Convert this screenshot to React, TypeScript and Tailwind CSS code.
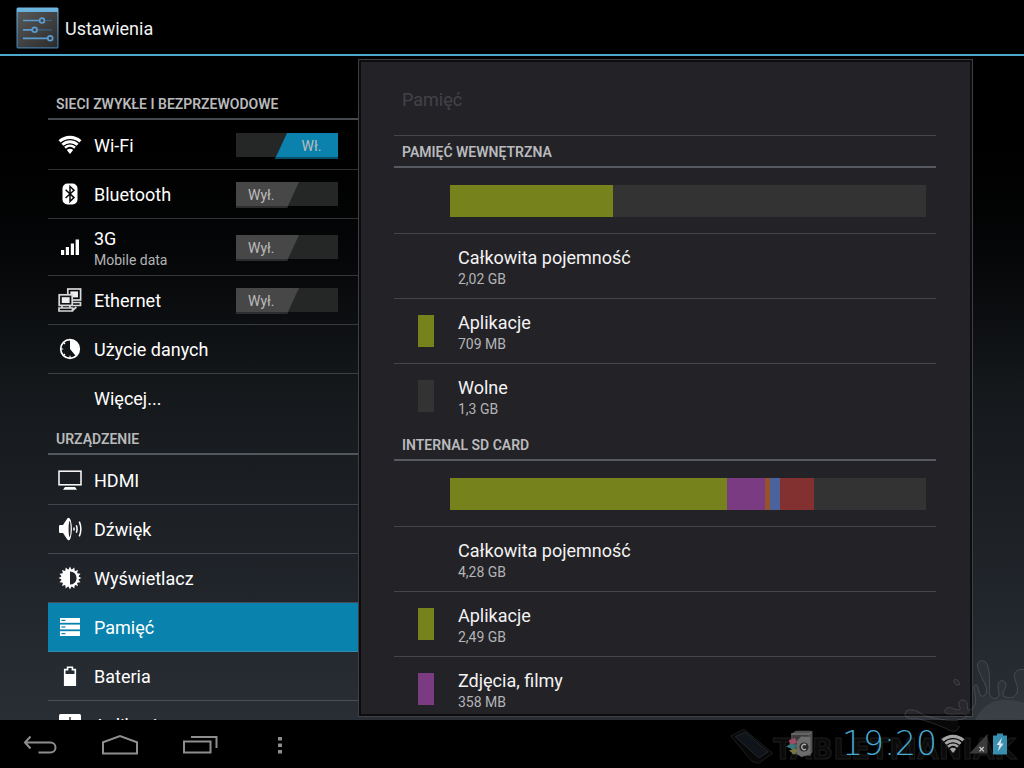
import { useState } from "react";
import type { ReactNode } from "react";

/* ---------- icons ---------- */

const WifiGlyph = () => (
  <svg width="24" height="20" viewBox="0 0 24 20" fill="none" stroke="currentColor">
    <path d="M1.6 6.4C7.4 .9 16.6 .9 22.4 6.4" strokeWidth="3.2" />
    <path d="M4.4 9.8C8.7 5.8 15.3 5.8 19.6 9.8" strokeWidth="2.9" />
    <path d="M7 12.8C9.9 10.2 14.1 10.2 17 12.8" strokeWidth="2.5" />
    <path d="M8.8 15C10.6 13.3 13.4 13.3 15.2 15L12 19Z" fill="currentColor" stroke="none" />
  </svg>
);

const BluetoothGlyph = () => (
  <svg width="16" height="22" viewBox="0 0 16 22">
    <rect x=".5" y=".5" width="15" height="21" rx="5" fill="currentColor" />
    <path d="M3.6 6.8L12 14.6L8 18.4V3.4L12 7.2L3.6 15" fill="none" stroke="#0a0b0c" strokeWidth="1.5" />
  </svg>
);

const SignalGlyph = () => (
  <svg width="20" height="16" viewBox="0 0 20 16" fill="currentColor">
    <rect x="1" y="11" width="3.2" height="5" />
    <rect x="5.8" y="8" width="3.2" height="8" />
    <rect x="10.8" y="4.5" width="3.2" height="11.5" />
    <rect x="15.6" y=".5" width="3.4" height="15.5" />
  </svg>
);

const EthernetGlyph = () => (
  <svg width="24" height="24" viewBox="0 0 24 24" fill="none" stroke="#d8d8d8" strokeWidth="1.7">
    <rect x="9.8" y="1" width="12.8" height="11" />
    <rect x="12.4" y="3.4" width="7.6" height="6" fill="#eee" stroke="none" />
    <path d="M15 14.5h7.5v3H15" />
    <rect x="1.2" y="6.8" width="13" height="10.6" fill="#111316" />
    <rect x="3.8" y="9.2" width="7.8" height="5.8" fill="#eee" stroke="none" />
    <path d="M1 20h13.5v3H1zM4 17.5v2.4M12 17.5v2.4M15 22l3.4-3" />
  </svg>
);

const DataUsageGlyph = () => (
  <svg width="22" height="22" viewBox="0 0 22 22">
    <circle cx="11" cy="11" r="9.3" fill="none" stroke="currentColor" strokeWidth="1.7" />
    <path d="M11 2A9 9 0 0 1 16.8 17.9L11 11Z" fill="currentColor" />
    <path d="M2 11h2.2M4.6 4.6l1.4 1.4M4.6 17.4l1.4-1.4M11 20v-2.2" stroke="currentColor" strokeWidth="1.2" />
  </svg>
);

const MonitorGlyph = () => (
  <svg width="24" height="20" viewBox="0 0 24 20">
    <rect x="1" y="1.2" width="22" height="13.6" fill="none" stroke="currentColor" strokeWidth="1.5" />
    <path d="M7 17h10l2 2.8H5z" fill="currentColor" />
  </svg>
);

const SoundGlyph = () => (
  <svg width="24" height="24" viewBox="0 0 24 24">
    <path d="M1 9.2Q1 8 2.3 8H5L9.5 1.2Q11.5-.6 12.8 3.6Q15 12 12.8 20.4Q11.5 24.6 9.5 22.8L5 16H2.3Q1 16 1 14.8Z" fill="currentColor" />
    <ellipse cx="11.6" cy="12" rx="1" ry="8" fill="#1e2226" />
    <path d="M16 10.4v3.2M18.3 8.2Q19.8 12 18.3 15.8M21.3 4.6Q24.4 12 21.3 19.4" fill="none" stroke="currentColor" strokeWidth="1.5" />
  </svg>
);

const teeth = Array.from({ length: 16 }, (_, i) => i * 22.5);

const BrightnessGlyph = () => (
  <svg width="24" height="24" viewBox="0 0 24 24">
    {teeth.map((a) => (
      <path key={a} d="M10.2 4.2L12 .6L13.8 4.2Z" fill="currentColor" transform={`rotate(${a} 12 12)`} />
    ))}
    <circle cx="12" cy="12" r="8.8" fill="currentColor" />
    <path d="M12 5.4A6.6 6.6 0 0 1 12 18.6Z" fill="#22262b" />
  </svg>
);

const StorageGlyph = () => (
  <svg width="22" height="20" viewBox="0 0 22 20">
    {[1, 7.6, 14.2].map((y) => (
      <g key={y}>
        <rect x="1" y={y} width="20" height="4.8" fill="currentColor" />
        <rect x="2.4" y={y + 1.8} width="4" height="1.2" fill="#0983ae" />
      </g>
    ))}
  </svg>
);

const BatteryGlyph = () => (
  <svg width="14" height="20" viewBox="0 0 14 20">
    <path d="M1.7 19.2V3.6H4.6V1.2H9.4V3.6H12.3V19.2Z" fill="none" stroke="currentColor" strokeWidth="1.6" />
    <rect x="1.5" y="8" width="11" height="11.4" fill="currentColor" />
  </svg>
);

const AppsGlyph = () => (
  <svg width="22" height="22" viewBox="0 0 22 22">
    <rect width="22" height="22" rx="1.5" fill="currentColor" />
    <path d="M11 3v16M4 11h14M7 7l8 8M15 7l-8 8" stroke="#272c32" strokeWidth="1.4" />
  </svg>
);

const SettingsLogo = () => (
  <svg width="43" height="42" viewBox="0 0 43 42" className="shrink-0">
    <defs>
      <linearGradient id="plate" x1="0" y1="0" x2="1" y2="1">
        <stop offset="0" stopColor="#585858" />
        <stop offset="1" stopColor="#2b2b2b" />
      </linearGradient>
      <linearGradient id="edge" x1="0" y1="0" x2="0" y2="1">
        <stop offset="0" stopColor="#6db7e0" />
        <stop offset="1" stopColor="#3f7aa9" />
      </linearGradient>
    </defs>
    <rect x=".5" y=".5" width="42" height="41" rx="1.5" fill="url(#edge)" />
    <rect x="1.6" y="5" width="39.8" height="35.3" fill="url(#plate)" />
    <path d="M28 13.5h8M21 22.8h15M36.5 31.3h1" stroke="#3a6283" strokeWidth="1.2" />
    <g stroke="#5a9bd0" strokeWidth="1.7" fill="none">
      <path d="M7 13.5h16.5M7 22.8h9M7 31.3h24.5" />
      <circle cx="26" cy="13.5" r="2.4" />
      <circle cx="18.6" cy="22.8" r="2.4" />
      <circle cx="34.2" cy="31.3" r="2.4" />
    </g>
  </svg>
);

/* ---------- settings list ---------- */

function Category({ children }: { children: ReactNode }) {
  return (
    <h2 className="flex h-8 items-center border-b-2 border-[#9aa0a8]/45 px-2 pt-[2px] text-sm font-semibold text-[#b9babc]">
      {children}
    </h2>
  );
}

function Toggle({ label, initial }: { label: string; initial: boolean }) {
  const [on, setOn] = useState(initial);
  return (
    <button
      type="button"
      role="switch"
      aria-checked={on}
      aria-label={label}
      onClick={() => setOn(!on)}
      className={`flex h-6 w-[102px] shrink-0 bg-[#252626] text-sm text-[#bcbcbc] ${on ? "justify-end" : "justify-start"}`}
    >
      {on ? (
        <span className="flex h-[26px] w-[63px] items-center justify-center border-b-2 border-[#07516c] bg-[#0a82ad] pt-[2px] pl-[10px] [clip-path:polygon(12px_0,100%_0,100%_100%,0_100%)]">
          Wł.
        </span>
      ) : (
        <span className="flex h-[26px] w-[63px] items-center border-b-2 border-[#2c2d2e] bg-[#474747] pt-[2px] pl-3 [clip-path:polygon(0_0,100%_0,51px_100%,0_100%)]">
          Wył.
        </span>
      )}
    </button>
  );
}

type Item = { title: string; sub?: string; icon?: ReactNode; toggle?: boolean; selected?: boolean };

const networks: Item[] = [
  { title: "Wi-Fi", icon: <WifiGlyph />, toggle: true },
  { title: "Bluetooth", icon: <BluetoothGlyph />, toggle: false },
  { title: "3G", sub: "Mobile data", icon: <SignalGlyph />, toggle: false },
  { title: "Ethernet", icon: <EthernetGlyph />, toggle: false },
  { title: "Użycie danych", icon: <DataUsageGlyph /> },
  { title: "Więcej..." },
];

const device: Item[] = [
  { title: "HDMI", icon: <MonitorGlyph /> },
  { title: "Dźwięk", icon: <SoundGlyph /> },
  { title: "Wyświetlacz", icon: <BrightnessGlyph /> },
  { title: "Pamięć", icon: <StorageGlyph />, selected: true },
  { title: "Bateria", icon: <BatteryGlyph /> },
  { title: "Aplikacje", icon: <AppsGlyph /> },
];

function NavList({ items }: { items: Item[] }) {
  return (
    <ul className="pt-px">
      {items.map((it) => (
        <li
          key={it.title}
          className={`flex items-center border-b border-[#9aa0a8]/30 pr-5 pl-2 last:border-transparent ${it.sub ? "h-[57px]" : "h-[49px]"} ${it.selected ? "bg-[#0983ae]" : ""}`}
        >
          <a href="#" className="flex flex-1 items-center gap-[10px] text-white">
            <span className="flex w-7 justify-center">{it.icon}</span>
            <span className="flex flex-col pt-[2px]">
              <span className="text-lg leading-6">{it.title}</span>
              {it.sub && <span className="text-sm leading-[18px] text-[#b3b4b6]">{it.sub}</span>}
            </span>
          </a>
          {it.toggle !== undefined && <Toggle label={it.title} initial={it.toggle} />}
        </li>
      ))}
    </ul>
  );
}

/* ---------- storage panel ---------- */

type Segment = { color: string; share: number };
type Entry = { title: string; size: string; color?: string };

function UsageBar({ segments }: { segments: Segment[] }) {
  return (
    <div className="border-b border-[#45454a] pt-[17px] pr-[10px] pb-4 pl-14">
      <div className="flex h-8 bg-[#333333]">
        {segments.map((s) => (
          <span key={s.color} style={{ width: `${s.share}%`, backgroundColor: s.color }} />
        ))}
      </div>
    </div>
  );
}

function Entries({ items }: { items: Entry[] }) {
  return (
    <ul>
      {items.map((e) => (
        <li key={e.title} className="flex h-[65px] items-center border-b border-[#45454a] pl-6 last:border-transparent">
          <span className="h-8 w-4" style={{ backgroundColor: e.color }} />
          <span className="flex flex-col pt-[2px] pl-6">
            <span className="text-lg leading-6 text-[#f3f3f3]">{e.title}</span>
            <span className="text-sm leading-[18px] text-[#b3b4b6]">{e.size}</span>
          </span>
        </li>
      ))}
    </ul>
  );
}

const internalBar: Segment[] = [{ color: "#76821b", share: 34.2 }];
const internal: Entry[] = [
  { title: "Całkowita pojemność", size: "2,02 GB" },
  { title: "Aplikacje", size: "709 MB", color: "#76821b" },
  { title: "Wolne", size: "1,3 GB", color: "#333333" },
];

const sdBar: Segment[] = [
  { color: "#76821b", share: 58.2 },
  { color: "#7b3b83", share: 8 },
  { color: "#95522c", share: 1.1 },
  { color: "#4a639c", share: 2 },
  { color: "#833031", share: 7.2 },
];
const sd: Entry[] = [
  { title: "Całkowita pojemność", size: "4,28 GB" },
  { title: "Aplikacje", size: "2,49 GB", color: "#76821b" },
  { title: "Zdjęcia, filmy", size: "358 MB", color: "#7b3b83" },
];

/* ---------- system bar ---------- */

const navButtons = [
  {
    label: "Wstecz",
    icon: (
      <svg width="34" height="20" viewBox="0 0 34 20" fill="none" stroke="#8e8e8e" strokeWidth="2">
        <path d="M7.5 1.5L2 7.5L7.5 13.5M2 7.5H27.5A5 5 0 0 1 27.5 17.5H15.5" />
      </svg>
    ),
  },
  {
    label: "Ekran główny",
    icon: (
      <svg width="38" height="22" viewBox="0 0 38 22" fill="none" stroke="#8e8e8e" strokeWidth="2">
        <path d="M2 19.5V8.2L19 2L36 8.2V19.5Z" />
      </svg>
    ),
  },
  {
    label: "Ostatnie aplikacje",
    icon: (
      <svg width="36" height="20" viewBox="0 0 36 20" fill="none" stroke="#8e8e8e" strokeWidth="2">
        <path d="M2 6.5H28.5V17.5H2ZM9 2H34.5V13" />
      </svg>
    ),
  },
  {
    label: "Menu",
    icon: (
      <svg width="6" height="18" viewBox="0 0 6 18" fill="#8e8e8e">
        <path d="M1 1h4v3.6H1zM1 7.4h4V11H1zM1 14h4v3.6H1z" />
      </svg>
    ),
  },
];

const GalleryGlyph = () => (
  <svg width="28" height="28" viewBox="0 0 28 28">
    <path d="M5 4L10 .8H25L26.5 3V22L24 26L6 24Z" fill="#505050" />
    <path d="M5 4H23L26.5 1.6" stroke="#7a7a7a" fill="none" />
    <rect x="6.5" y="5" width="15" height="9" fill="#3c3c3c" />
    <path d="M3 10l6-2 2 5-7 2z" fill="#a04c68" />
    <path d="M0 16.5l5-3 6 2-4 4z" fill="#37787a" />
    <path d="M3 20.5l6-2 3 2-4 4z" fill="#77763f" />
    <path d="M11 11l4-4.5 9.5.5V24l-9 3-4.5-3z" fill="#6d6d6d" />
    <circle cx="18" cy="17" r="4.6" fill="#2a2a2a" />
    <path d="M20 15A2.6 2.6 0 1 0 20 19" stroke="#aaa" strokeWidth="1.3" fill="none" />
  </svg>
);

const NoSignalGlyph = () => (
  <svg width="20" height="22" viewBox="0 0 20 22">
    <path d="M18.5 1V20.5H.5Z" fill="#3b3b3b" />
    <path d="M10.5 14l4.4 4.4M14.9 14l-4.4 4.4" stroke="#c4c4c4" strokeWidth="1.3" />
  </svg>
);

const ChargingGlyph = () => (
  <svg width="14" height="22" viewBox="0 0 14 22">
    <path d="M0 2.4H4V.5H10V2.4H14V21.6H0Z" fill="#398fb0" />
    <path d="M9 4.5L3.6 12H6.4L4.8 18.5L10.6 10.6H7.6Z" fill="#d8e8ee" />
  </svg>
);

function Watermark() {
  return (
    <svg
      aria-hidden="true"
      className="pointer-events-none absolute right-0 bottom-0 h-32 w-[324px]"
      viewBox="0 0 972 384"
      fill="#ffffff"
      fillOpacity=".03"
      stroke="#ffffff"
      strokeOpacity=".13"
      strokeWidth="3"
    >
      <path d="M826 240C840 204 880 176 918 180C944 180 960 184 972 188V240Z" fillOpacity=".06" stroke="none" />
      <path d="M980 238V90C955 84 940 94 943 112C948 130 955 138 951 158C944 176 924 176 910 168C906 156 918 146 918 134C918 118 896 118 894 134C892 148 900 156 896 168C888 182 870 176 868 158C868 134 872 100 862 74C852 54 832 62 832 78C838 100 850 120 858 140C862 160 856 170 844 168C832 156 838 138 828 134C816 138 826 156 826 170C830 190 822 210 804 210C800 204 806 190 796 182C780 174 770 190 780 202C784 214 768 210 752 203C736 200 728 216 742 222C760 226 784 218 798 224C806 232 790 238 770 240" />
      <path d="M772 242C740 242 700 236 672 226C652 212 632 204 618 214C606 232 630 240 650 236C690 244 720 258 748 270C764 280 776 270 778 258" />
      <path d="M762 120C768 114 780 124 778 134C770 138 760 130 762 120Z" />
      <g strokeOpacity=".1">
        <path d="M92 288L132 268L218 340L176 370L156 364Z" />
        <path d="M106 290L136 276L204 336L176 354Z" fill="#25354f" fillOpacity=".25" />
      </g>
    </svg>
  );
}

export default function App() {
  return (
    <div className="relative flex h-screen flex-col overflow-hidden bg-black font-[Roboto,'Noto_Sans',sans-serif] text-white">
      <header className="flex h-14 shrink-0 items-center gap-[6px] border-b-2 border-[#4fa9cd] pt-[2px] pl-4">
        <SettingsLogo />
        <h1 className="pt-[2px] text-lg text-[#f3f3f3]">Ustawienia</h1>
      </header>

      <main className="flex min-h-0 flex-1 bg-linear-to-b from-black via-[#15181b] to-[#292e35]">
        <nav aria-label="Ustawienia" className="w-[358px] shrink-0 overflow-hidden pt-8 pl-12">
          <Category>SIECI ZWYKŁE I BEZPRZEWODOWE</Category>
          <NavList items={networks} />
          <Category>URZĄDZENIE</Category>
          <NavList items={device} />
        </nav>

        <section className="my-[3px] mr-[51px] flex min-w-0 flex-1 border border-[#3d3f42] bg-[#0c0c0e] p-[2px]">
          <div className="min-w-0 flex-1 overflow-hidden bg-[#232227] pr-[34px] pl-[33px]">
            <h2 className="flex h-[74px] items-center border-b border-[#45454a] px-2 pt-[2px] text-lg text-[#434347]">
              Pamięć
            </h2>
            <Category>PAMIĘĆ WEWNĘTRZNA</Category>
            <UsageBar segments={internalBar} />
            <Entries items={internal} />
            <Category>INTERNAL SD CARD</Category>
            <UsageBar segments={sdBar} />
            <Entries items={sd} />
          </div>
        </section>
      </main>

      <footer className="relative flex h-12 shrink-0 items-center bg-black">
        {navButtons.map((b) => (
          <button key={b.label} type="button" aria-label={b.label} className="flex h-12 w-20 items-center justify-center pt-[2px]">
            {b.icon}
          </button>
        ))}
        <span
          aria-hidden="true"
          className="absolute right-2 bottom-0 font-['DejaVu_Sans',sans-serif] text-[28px] leading-9 font-bold text-[#0b0b0b] [-webkit-text-stroke:1px_#1d1d1d]"
        >
          TABLETMANIAK
        </span>
        <div className="relative ml-auto flex items-center pr-[17px]">
          <GalleryGlyph />
          <time className="pr-1 pl-7 font-['DejaVu_Sans_Light','DejaVu_Sans',sans-serif] text-[33px] leading-10 font-extralight text-[#45a9d0]">
            19:20
          </time>
          <span className="flex items-center gap-1 text-[#a5a5a5]">
            <WifiGlyph />
            <NoSignalGlyph />
            <ChargingGlyph />
          </span>
        </div>
      </footer>
      <Watermark />
    </div>
  );
}
